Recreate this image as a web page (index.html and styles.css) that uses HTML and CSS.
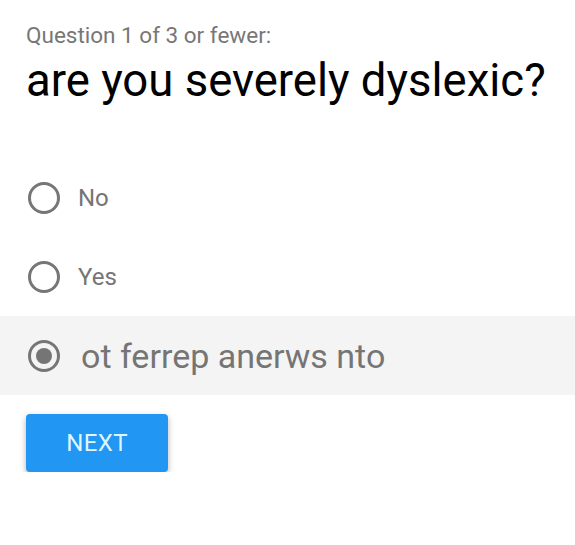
FILE: index.html
```html
<!DOCTYPE html>
<html lang="en">
<head>
    <meta charset="UTF-8">
    <meta name="viewport" content="width=device-width, initial-scale=1.0">
    <title>Quiz</title>
    <link rel="stylesheet" href="styles.css">
</head>
<body>
    <div class="quiz">
        <p class="counter">Question 1 of 3 or fewer:</p>
        <h1 class="question">are you severely dyslexic?</h1>

        <form class="options">
            <label class="option">
                <input type="radio" name="answer" value="no">
                <span>No</span>
            </label>
            <label class="option">
                <input type="radio" name="answer" value="yes">
                <span>Yes</span>
            </label>
            <label class="option selected">
                <input type="radio" name="answer" value="other" checked>
                <span>ot ferrep anerws nto</span>
            </label>
        </form>

        <button class="next" type="button">NEXT</button>
    </div>
</body>
</html>
```

FILE: styles.css
```css
body {
    margin: 0;
    background: #ffffff;
    font-family: Roboto, "Liberation Sans", sans-serif;
}
.quiz {
    padding-top: 22px;
}
.counter {
    margin: 0;
    padding-left: 26px;
    font-size: 22.5px;
    line-height: 26px;
    color: #777777;
}
.question {
    margin: 7px 0 0;
    padding-left: 26px;
    font-size: 45.5px;
    font-weight: 400;
    line-height: 52px;
    color: #000000;
}
.options {
    margin-top: 51px;
}
.option {
    display: flex;
    align-items: center;
    gap: 18px;
    height: 79px;
    padding-left: 28px;
    font-size: 24px;
    color: #757575;
}
.option input {
    appearance: none;
    -webkit-appearance: none;
    box-sizing: border-box;
    width: 32px;
    height: 32px;
    margin: 0;
    border: 3px solid #767676;
    border-radius: 50%;
    display: flex;
    align-items: center;
    justify-content: center;
}
.option input:checked::after {
    content: "";
    width: 16px;
    height: 16px;
    border-radius: 50%;
    background: #757575;
}
.option.selected {
    background: #f4f4f4;
    font-size: 34px;
    gap: 21px;
}
.next {
    margin: 19px 0 0 26px;
    width: 142px;
    height: 58px;
    border: none;
    border-radius: 4px;
    background: #2196f3;
    color: #def6ff;
    font-family: inherit;
    font-size: 24px;
    letter-spacing: 0.4px;
    box-shadow: 0 3px 6px rgba(0, 0, 0, 0.3);
    cursor: pointer;
}
```
